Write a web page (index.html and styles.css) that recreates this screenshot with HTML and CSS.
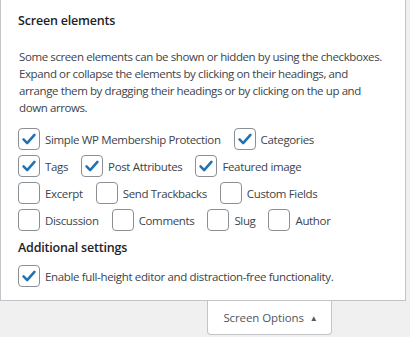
FILE: index.html
```html
<!DOCTYPE html>
<html lang="en">
<head>
  <meta charset="UTF-8">
  <title>Screen Options</title>
  <link rel="stylesheet" href="styles.css">
</head>
<body>
  <div class="screen-meta">
    <div class="panel">
      <h5>Screen elements</h5>
      <p>Some screen elements can be shown or hidden by using the checkboxes. Expand or collapse the elements by clicking on their headings, and arrange them by dragging their headings or by clicking on the up and down arrows.</p>

      <div class="boxes">
        <div class="row">
          <label class="opt"><span class="box on"><svg viewBox="0 0 22 22"><path d="M5 11.5l4 4 8-9"/></svg></span>Simple WP Membership Protection</label>
          <label class="opt"><span class="box on"><svg viewBox="0 0 22 22"><path d="M5 11.5l4 4 8-9"/></svg></span>Categories</label>
        </div>
        <div class="row">
          <label class="opt"><span class="box on"><svg viewBox="0 0 22 22"><path d="M5 11.5l4 4 8-9"/></svg></span>Tags</label>
          <label class="opt"><span class="box on"><svg viewBox="0 0 22 22"><path d="M5 11.5l4 4 8-9"/></svg></span>Post Attributes</label>
          <label class="opt"><span class="box on"><svg viewBox="0 0 22 22"><path d="M5 11.5l4 4 8-9"/></svg></span>Featured image</label>
        </div>
        <div class="row">
          <label class="opt"><span class="box"></span>Excerpt</label>
          <label class="opt"><span class="box"></span>Send Trackbacks</label>
          <label class="opt"><span class="box"></span>Custom Fields</label>
        </div>
        <div class="row">
          <label class="opt"><span class="box"></span>Discussion</label>
          <label class="opt"><span class="box"></span>Comments</label>
          <label class="opt"><span class="box"></span>Slug</label>
          <label class="opt"><span class="box"></span>Author</label>
        </div>
      </div>

      <h5 class="extra">Additional settings</h5>
      <label class="opt single"><span class="box on"><svg viewBox="0 0 22 22"><path d="M5 11.5l4 4 8-9"/></svg></span>Enable full-height editor and distraction-free functionality.</label>
    </div>

    <div class="tab-row">
      <button class="tab">Screen Options <span class="arrow">&#9650;</span></button>
    </div>
  </div>
</body>
</html>
```

FILE: styles.css
```css
body {
  margin: 0;
  background: #f0f0f1;
  font-family: 'Open Sans', 'Noto Sans', sans-serif;
  font-size: 11.5px;
  letter-spacing: -0.35px;
  color: #3c434a;
}

.screen-meta {
  width: 406px;
}

.panel {
  background: #ffffff;
  border: 1px solid #c3c4c7;
  border-top: none;
  padding: 11px 17px 13px;
}

.panel h5 {
  margin: 0;
  font-size: 12.5px;
  font-weight: 600;
  letter-spacing: -0.2px;
  line-height: 20px;
  color: #1d2327;
}

.panel p {
  margin: 17px 0 0 1px;
  line-height: 17px;
  letter-spacing: -0.4px;
  color: #3c434a;
}

.boxes {
  display: flex;
  flex-direction: column;
  gap: 5px;
  margin-top: 12px;
}

.row {
  display: flex;
  gap: 13px;
}

.opt {
  display: flex;
  align-items: center;
  gap: 5px;
  height: 22px;
  color: #3c434a;
}

.box {
  width: 20px;
  height: 20px;
  border: 1px solid #8c8f94;
  border-radius: 4px;
  background: #ffffff;
  flex-shrink: 0;
}

.box svg {
  width: 20px;
  height: 20px;
  display: block;
}

.box svg path {
  fill: none;
  stroke: #2271b1;
  stroke-width: 2.8;
  stroke-linecap: round;
  stroke-linejoin: round;
}

.panel h5.extra {
  margin-top: 7px;
}

.opt.single {
  margin-top: 7px;
}

.tab-row {
  display: flex;
  padding-left: 207px;
}

.tab {
  width: 125px;
  height: 34px;
  background: #ffffff;
  border: 1px solid #c3c4c7;
  border-top: none;
  border-radius: 0 0 4px 4px;
  font-family: inherit;
  font-size: 11.5px;
  letter-spacing: -0.1px;
  color: #50575e;
  padding: 0 0 0 2px;
}

.tab .arrow {
  font-size: 8px;
  margin-left: 3px;
  position: relative;
  top: -1px;
}
```
